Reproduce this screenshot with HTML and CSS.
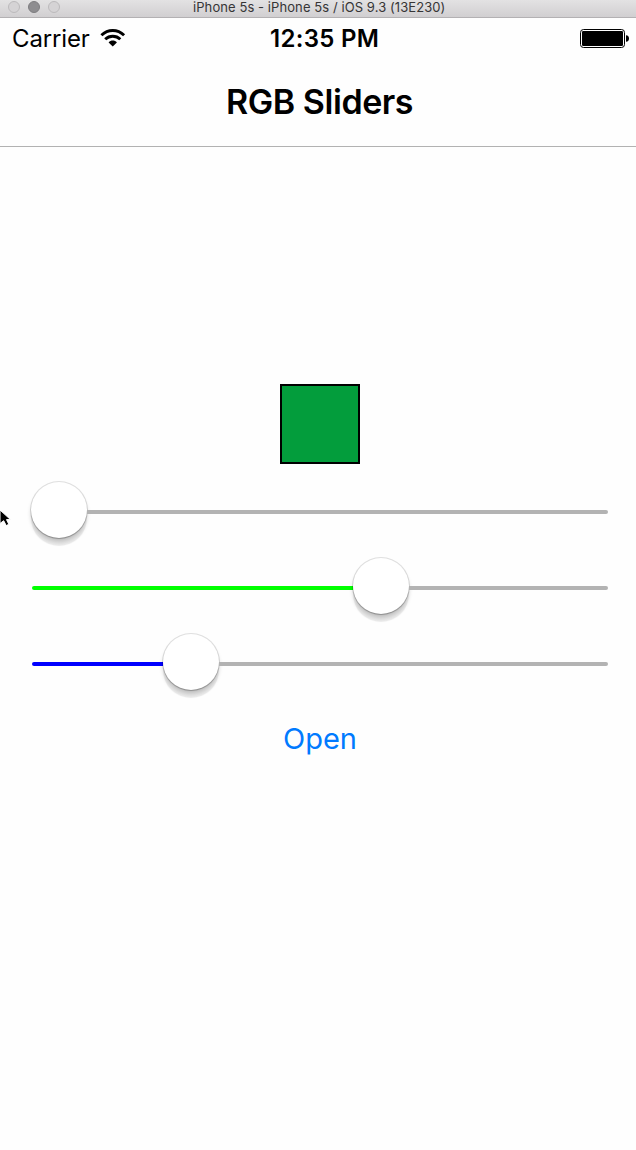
FILE: index.html
```html
<!DOCTYPE html>
<html lang="en">
<head>
<meta charset="utf-8">
<title>RGB Sliders</title>
<link rel="stylesheet" href="styles.css">
</head>
<body>
<div class="titlebar">
  <div class="lights"><span class="light"></span><span class="light light-active"></span><span class="light"></span></div>
  <span class="window-title">iPhone 5s - iPhone 5s / iOS 9.3 (13E230)</span>
</div>
<div class="status">
  <div class="carrier">
    <span class="carrier-name">Carrier</span>
    <svg class="wifi" width="26" height="20" viewBox="0 0 26 20" fill="none" stroke="#000" stroke-width="2.9">
      <path d="M1.4 7.3C8 .8 17.5 .8 24.1 7.3"/>
      <path d="M5.2 11.2C9.4 7.2 16.1 7.2 20.3 11.2"/>
      <path d="M8.6 14.4C10.8 12 14.7 12 16.9 14.4L12.75 18.4Z" fill="#000" stroke="none"/>
    </svg>
  </div>
  <span class="clock">12:35 PM</span>
  <svg class="battery" width="50" height="20" viewBox="0 0 50 20">
    <rect x=".5" y=".5" width="44" height="18" rx="3" fill="#fff" stroke="#000"/>
    <rect x="2" y="2" width="41" height="15" rx="1.2"/>
    <path d="M46 6.2C48.2 6.3 49 7.5 49 9.5S48.2 12.7 46 12.8Z"/>
  </svg>
</div>
<header class="nav"><h1 class="title">RGB Sliders</h1></header>
<main class="content">
  <div class="swatch"></div>
  <div class="sliders">
    <div class="slider"><span class="fill fill-red"></span><span class="thumb"></span><span class="rest"></span></div>
    <div class="slider"><span class="fill fill-green"></span><span class="thumb"></span><span class="rest"></span></div>
    <div class="slider"><span class="fill fill-blue"></span><span class="thumb"></span><span class="rest"></span></div>
  </div>
  <a class="open">Open</a>
</main>
<svg class="cursor" width="13" height="20" viewBox="0 0 13 20">
  <path d="M0 1V14.5L3.7 11.7L6.2 16.6L8.8 15.3L6.5 10.6H10.5Z" fill="#000" stroke="#fff" stroke-width="1"/>
</svg>
</body>
</html>
```
FILE: styles.css
```css
* { box-sizing: border-box; }
body {
  margin: 0;
  height: 1150px;
  overflow: hidden;
  position: relative;
  background: #fefefe;
  color: #000;
  font-family: Inter, "Liberation Sans", sans-serif;
}
.titlebar {
  height: 18px;
  display: grid;
  grid-template-columns: 193px 1fr;
  background: linear-gradient(#e3e2e3, #d1cfd1);
  border-bottom: 1px solid #b3b1b3;
}
.lights { display: flex; gap: 8px; padding: 1px 0 0 8px; }
.light { width: 12px; height: 12px; border-radius: 50%; background: #d5d3d5; border: 1px solid #bcbabc; }
.light-active { background: #8e8d90; border-color: #7e7d80; }
.window-title { font-size: 13px; line-height: 15px; letter-spacing: 0.08px; color: #363536; white-space: nowrap; }
.status {
  height: 42px;
  display: grid;
  grid-template-columns: 258px 1fr 56px;
  padding-left: 12px;
  line-height: 42px;
  white-space: nowrap;
}
.carrier { display: flex; align-items: flex-start; }
.carrier-name { width: 88px; font-size: 24px; letter-spacing: -0.15px; }
.wifi { margin-top: 10px; }
.clock { font-size: 24px; font-weight: 600; letter-spacing: 0.3px; }
.battery { margin-top: 11px; }
.nav { height: 87px; border-bottom: 1px solid #b2b2b2; }
.title { margin: 0; padding: 21px 0 0 226px; font-size: 34px; line-height: 42px; font-weight: 600; letter-spacing: -0.45px; white-space: nowrap; }
.content { display: flex; flex-direction: column; padding-top: 237px; }
.swatch { width: 80px; height: 80px; margin-left: 280px; background: #039d3c; border: 2px solid #000; }
.sliders { padding: 10px 28px 0 32px; }
.slider { height: 76px; display: flex; align-items: center; }
.fill { flex: none; height: 4px; border-radius: 2px 0 0 2px; }
.fill-red { width: 0; margin-left: -1px; }
.fill-green { width: 321px; background: #0f0; }
.fill-blue { width: 131px; background: #00f; }
.rest { flex: 1; height: 4px; background: #b3b3b3; border-radius: 0 2px 2px 0; }
.thumb {
  flex: none;
  width: 56px;
  height: 56px;
  margin-bottom: 4px;
  border-radius: 50%;
  background: #fff;
  box-shadow: 0 0 0 1px rgba(0,0,0,.12), 0 1px 1px rgba(0,0,0,.16), 0 4px 4px rgba(0,0,0,.18), 0 8px 1px rgba(0,0,0,.08);
}
.open { margin: 19px 0 0 283px; font-size: 29px; line-height: 36px; color: #007aff; }
.cursor { position: absolute; left: 0; top: 509px; }
```
